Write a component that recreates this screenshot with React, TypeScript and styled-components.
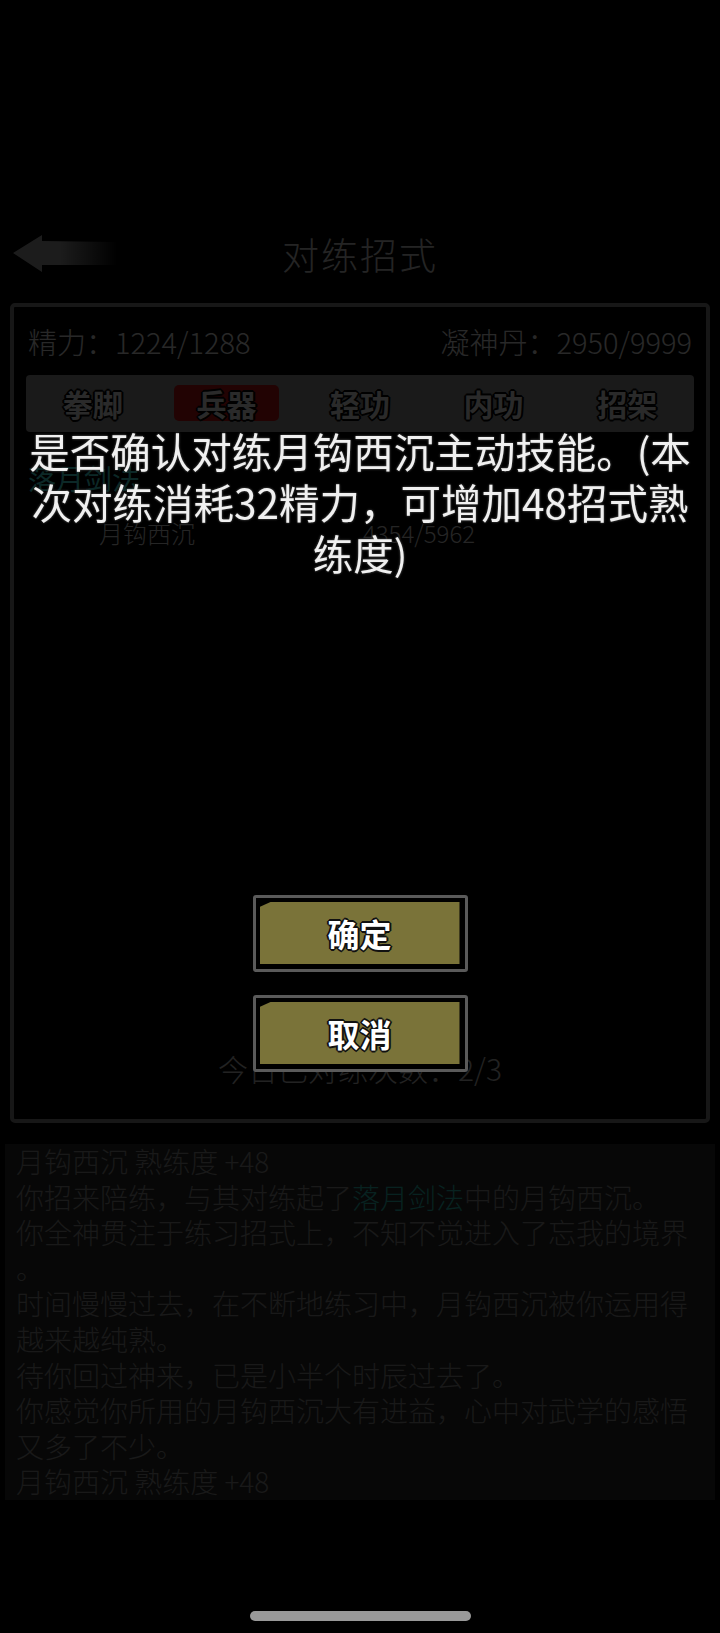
import React from 'react';
import styled, { createGlobalStyle } from 'styled-components';

const GlobalStyle = createGlobalStyle`
  html, body {
    margin: 0;
    padding: 0;
    background: #000;
  }
  body {
    font-family: "Noto Sans CJK SC", "Noto Sans", sans-serif;
    color: #fff;
  }
  * {
    box-sizing: border-box;
  }
`;

const tabs = ['拳脚', '兵器', '轻功', '内功', '招架'];

interface LogPart {
  text: string;
  art?: boolean;
}

const logs: LogPart[][] = [
  [{ text: '月钩西沉 熟练度 +48' }],
  [
    { text: '你招来陪练，与其对练起了' },
    { text: '落月剑法', art: true },
    { text: '中的月钩西沉。' },
  ],
  [{ text: '你全神贯注于练习招式上，不知不觉进入了忘我的境界。' }],
  [{ text: '时间慢慢过去，在不断地练习中，月钩西沉被你运用得越来越纯熟。' }],
  [{ text: '待你回过神来，已是小半个时辰过去了。' }],
  [{ text: '你感觉你所用的月钩西沉大有进益，心中对武学的感悟又多了不少。' }],
  [{ text: '月钩西沉 熟练度 +48' }],
];

const BackArrow: React.FC = () => (
  <svg width="108" height="40" viewBox="0 0 108 40">
    <defs>
      <linearGradient id="arrowFade" x1="0" y1="0" x2="1" y2="0">
        <stop offset="0" stopColor="#8c8c8c" />
        <stop offset="0.45" stopColor="#8c8c8c" />
        <stop offset="1" stopColor="#8c8c8c" stopOpacity="0" />
      </linearGradient>
    </defs>
    <polygon
      points="1,19 30,1 30,7 106,8 106,31 30,31 30,38"
      fill="url(#arrowFade)"
    />
  </svg>
);

const App: React.FC = () => {
  return (
    <>
      <GlobalStyle />
      <Page>
        <Header>
          <BackButton>
            <BackArrow />
          </BackButton>
          <Title>对练招式</Title>
          <span />
        </Header>

        <Panel>
          <StatsRow>
            <span>精力：1224/1288</span>
            <span>凝神丹：2950/9999</span>
          </StatsRow>

          <TabBar>
            {tabs.map((t) => (
              <TabCell key={t}>
                <Tab $active={t === '兵器'}>{t}</Tab>
              </TabCell>
            ))}
          </TabBar>

          <ArtName>落月剑法</ArtName>
          <SkillRow>
            <span>月钩西沉</span>
            <span>4354/5962</span>
          </SkillRow>

          <DailyCount>今日已对练次数：2/3</DailyCount>
        </Panel>

        <LogPanel>
          {logs.map((line, i) => (
            <LogLine key={i}>
              {line.map((p, j) =>
                p.art ? <ArtText key={j}>{p.text}</ArtText> : <span key={j}>{p.text}</span>
              )}
            </LogLine>
          ))}
        </LogPanel>
      </Page>

      <Overlay>
        <Message>
          是否确认对练月钩西沉主动技能。(本次对练消耗32精力，可增加48招式熟练度)
        </Message>
        <ButtonStack>
          <DialogButton>
            <ButtonFace>确定</ButtonFace>
          </DialogButton>
          <DialogButton>
            <ButtonFace>取消</ButtonFace>
          </DialogButton>
        </ButtonStack>
      </Overlay>

      <HomeIndicator />
    </>
  );
};

// page underneath the dialog
const Page = styled.div`
  width: 720px;
  height: 1633px;
  display: flex;
  flex-direction: column;
  overflow: hidden;
`;

const Header = styled.div`
  margin-top: 224px;
  height: 60px;
  display: grid;
  grid-template-columns: 1fr auto 1fr;
  align-items: center;
`;

const BackButton = styled.div`
  padding-left: 12px;
  display: flex;
  align-items: center;
`;

const Title = styled.div`
  font-size: 37px;
  font-weight: 300;
  letter-spacing: 2px;
  color: #b4b4b4;
  line-height: 60px;
`;

const Panel = styled.div`
  margin: 19px 10px 0;
  height: 820px;
  border: 4px solid #747474;
  border-radius: 5px;
  padding: 0 12px;
  display: flex;
  flex-direction: column;
`;

const StatsRow = styled.div`
  margin-top: 14px;
  height: 40px;
  padding: 0 2px;
  display: flex;
  justify-content: space-between;
  align-items: center;
  font-size: 29px;
  font-weight: 300;
  color: #c8c8c8;
`;

const TabBar = styled.div`
  margin-top: 14px;
  padding: 10px 0 11px;
  display: grid;
  grid-template-columns: repeat(5, 1fr);
  background: #808080;
  border-radius: 4px;
`;

const TabCell = styled.div`
  display: flex;
  justify-content: center;
`;

const Tab = styled.div<{ $active?: boolean }>`
  width: 105px;
  height: 36px;
  display: flex;
  align-items: center;
  justify-content: center;
  border-radius: 5px;
  background: ${(p) => (p.$active ? '#a80f0f' : 'transparent')};
  font-size: 30px;
  font-weight: 700;
  color: #d0d0d0;
  text-shadow: 1px 1px 0 #000, -1px -1px 0 #000, 1px -1px 0 #000, -1px 1px 0 #000,
    0 2px 0 #000, 2px 0 0 #000, 0 -2px 0 #000, -2px 0 0 #000;
`;

const ArtName = styled.div`
  margin-top: 28px;
  padding-left: 2px;
  font-size: 28px;
  line-height: 36px;
  color: #3cc8c0;
`;

const SkillRow = styled.div`
  margin-top: 19px;
  display: grid;
  grid-template-columns: 242px 302px 1fr;
  font-size: 24px;
  line-height: 36px;
  font-weight: 300;
  color: #b8b8b8;
  text-align: center;
`;

const DailyCount = styled.div`
  margin-top: auto;
  margin-bottom: 31px;
  text-align: center;
  font-size: 30px;
  font-weight: 300;
  line-height: 40px;
  color: #a8a8a8;
`;

const LogPanel = styled.div`
  margin: 21px 5px 0;
  padding: 0 11px;
  background: #242424;
  font-size: 28px;
  line-height: 35.6px;
  font-weight: 300;
  color: #7c7c7c;
  line-break: anywhere;
`;

const LogLine = styled.div``;

const ArtText = styled.span`
  color: #28a8a0;
`;

// confirm dialog on top of the dimmed page
const Overlay = styled.div`
  position: fixed;
  inset: 0;
  background: rgba(0, 0, 0, 0.8);
  display: flex;
  flex-direction: column;
  align-items: center;
`;

const Message = styled.div`
  margin-top: 425px;
  width: 664px;
  text-align: center;
  font-size: 40.5px;
  line-height: 51px;
  color: #f0f0f0;
  text-shadow: 0 0 2px #444, 0 0 3px #333;
`;

const ButtonStack = styled.div`
  margin-top: 317px;
  display: flex;
  flex-direction: column;
  gap: 23px;
`;

const DialogButton = styled.div`
  width: 215px;
  height: 77px;
  border: 3px solid #5a5a5a;
  border-radius: 3px;
  background: #000;
  padding: 4px 5px 5px 4px;
  display: flex;
`;

const ButtonFace = styled.div`
  flex: 1;
  background: #7a7339;
  clip-path: polygon(11px 0, 100% 0, 100% 100%, 0 100%, 0 5px);
  display: flex;
  align-items: center;
  justify-content: center;
  font-size: 32px;
  font-weight: 700;
  color: #fff;
  text-shadow: 1px 1px 0 #111, -1px -1px 0 #111, 1px -1px 0 #111, -1px 1px 0 #111,
    0 2px 0 #111, 2px 0 0 #111, 0 -2px 0 #111, -2px 0 0 #111;
`;

const HomeIndicator = styled.div`
  position: fixed;
  left: 250px;
  bottom: 12px;
  width: 221px;
  height: 10px;
  border-radius: 5px;
  background: #999;
`;

export default App;
